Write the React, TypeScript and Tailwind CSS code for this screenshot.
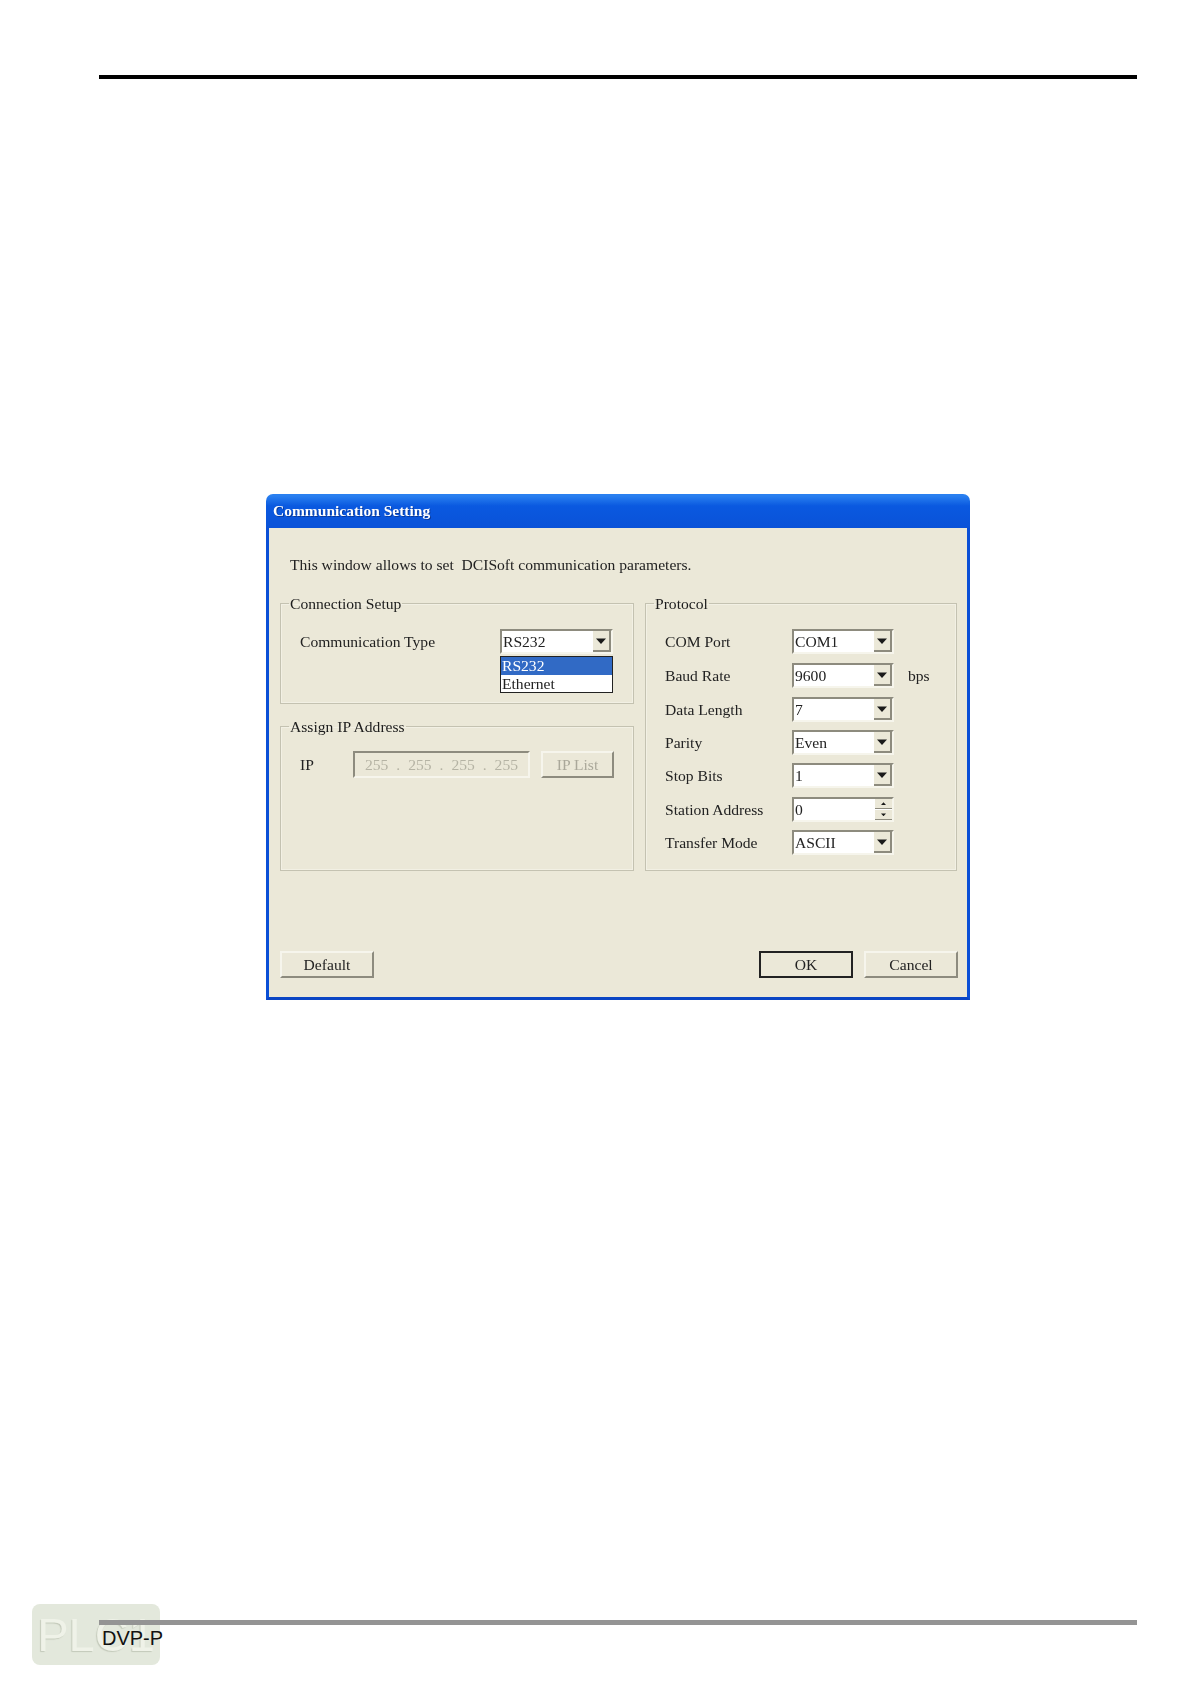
const sunken = "border-2 border-t-[#8d8b7e] border-l-[#8d8b7e] border-r-[#f6f5ec] border-b-[#f6f5ec]";
const raised = "border-2 border-t-[#f6f5ec] border-l-[#f6f5ec] border-r-[#8d8b7e] border-b-[#8d8b7e]";

const protocolRows = [
  { label: "COM Port", value: "COM1", gap: "mt-0" },
  { label: "Baud Rate", value: "9600", gap: "mt-[9px]", unit: "bps" },
  { label: "Data Length", value: "7", gap: "mt-[9px]" },
  { label: "Parity", value: "Even", gap: "mt-[8px]" },
  { label: "Stop Bits", value: "1", gap: "mt-[8px]" },
  { label: "Station Address", value: "0", gap: "mt-[9px]", spin: true },
  { label: "Transfer Mode", value: "ASCII", gap: "mt-[8px]" },
];

function Arrow({ up = false, size = 10 }: { up?: boolean; size?: number }) {
  return (
    <svg width={size} height={size / 2 + 1} viewBox="0 0 10 6" className={up ? "rotate-180" : ""}>
      <path d="M0 0.5h10L5 6z" fill="#1a1a1a" />
    </svg>
  );
}

function Combo({ value, spin, className }: { value: string; spin?: boolean; className: string }) {
  return (
    <div className={`flex h-[25px] bg-white ${sunken} ${className}`}>
      <span className="flex-1 pl-[1px] leading-[21px]">{value}</span>
      {spin ? (
        <div className="flex w-[17px] flex-col gap-[1px]">
          <div className="flex flex-1 items-center justify-center border-b border-[#8d8b7e] bg-[#ebe8d8]">
            <Arrow up size={5} />
          </div>
          <div className="flex flex-1 items-center justify-center border-b border-[#8d8b7e] bg-[#ebe8d8]">
            <Arrow size={5} />
          </div>
        </div>
      ) : (
        <div className="flex w-[18px] items-center justify-center border-r-2 border-b-2 border-r-[#8d8b7e] border-b-[#8d8b7e] bg-[#ebe8d8]">
          <Arrow />
        </div>
      )}
    </div>
  );
}

function Group({ title, className, children }: { title: string; className: string; children?: React.ReactNode }) {
  return (
    <fieldset className={`border border-[#c4c2b1] shadow-[inset_0_0_0_1px_#f2f0e4] ${className}`}>
      <legend className="ml-[8px] h-[20px] px-[1px] leading-[21px] text-[#1c1c1c]">{title}</legend>
      {children}
    </fieldset>
  );
}

function Button({ label, className }: { label: string; className: string }) {
  return (
    <button className={`h-[27px] bg-[#ebe8d8] text-center ${className}`}>
      {label}
    </button>
  );
}

export default function App() {
  return (
    <div className="h-[1684px] w-[1190px] overflow-hidden bg-white pt-[75px] font-['Liberation_Sans',sans-serif]">
      <div className="ml-[99px] mr-[53px] h-[4px] bg-black" />

      <div className="ml-[266px] mt-[415px] flex h-[506px] w-[704px] flex-col font-['Liberation_Serif',serif] text-[15.6px] text-[#222] blur-[0.3px]">
        <div className="flex h-[34px] items-center rounded-t-[7px] bg-gradient-to-b from-[#2a80f0] from-[5%] via-[#0a59e0] via-[35%] to-[#0a52d8] pl-[7px] text-[15.5px] font-bold text-white [text-shadow:1px_1px_0_#0a3a9a]">
          Communication Setting
        </div>

        <div className="flex flex-1 flex-col border-x-[3px] border-b-[3px] border-x-[#0a4fd6] border-b-[#0a45c4] bg-[#ebe8d8] pl-[11px]">
          <p className="mt-[27px] h-[20px] pl-[10px] leading-[20px]">This window allows to set&nbsp; DCISoft communication parameters.</p>

          <div className="mt-[18px] flex gap-[11px]">
            <div className="flex w-[354px] flex-col gap-[12px]">
              <Group title="Connection Setup" className="relative h-[111px]">
                <div className="ml-[19px] mt-[16px] flex h-[25px] items-center justify-between pr-[20px]">
                  <span className="leading-[25px]">Communication Type</span>
                  <Combo value="RS232" className="w-[113px]" />
                </div>
                <ul className="absolute left-[219px] top-[43px] h-[37px] w-[113px] border border-[#222] bg-white leading-[18px]">
                  <li className="h-[18px] bg-[#316ac5] pl-[1px] text-white">RS232</li>
                  <li className="pl-[1px]">Ethernet</li>
                </ul>
              </Group>

              <Group title="Assign IP Address" className="h-[155px]">
                <div className="ml-[19px] mt-[15px] flex h-[27px] items-center">
                  <span className="w-[53px]">IP</span>
                  <div className={`flex h-[27px] w-[177px] items-center justify-around px-[6px] text-[#b5b3a4] ${sunken}`}>
                    <span>255</span><span>.</span><span>255</span><span>.</span><span>255</span><span>.</span><span>255</span>
                  </div>
                  <Button label="IP List" className={`ml-[11px] w-[73px] text-[#aaa89a] ${raised}`} />
                </div>
              </Group>
            </div>

            <Group title="Protocol" className="h-[278px] w-[312px]">
              <div className="ml-[19px] mt-[16px] flex flex-col">
                {protocolRows.map((row) => (
                  <div key={row.label} className={`flex h-[25px] items-center ${row.gap}`}>
                    <span className="w-[127px] leading-[25px]">{row.label}</span>
                    <Combo value={row.value} spin={row.spin} className="w-[102px]" />
                    {row.unit && <span className="ml-[14px]">{row.unit}</span>}
                  </div>
                ))}
              </div>
            </Group>
          </div>

          <div className="mt-[80px] flex pr-[9px]">
            <Button label="Default" className={`w-[94px] ${raised}`} />
            <Button label="OK" className="ml-auto w-[94px] border-2 border-[#222]" />
            <Button label="Cancel" className={`ml-[11px] w-[94px] ${raised}`} />
          </div>
        </div>
      </div>

      <div className="relative ml-[99px] mr-[53px] mt-[620px] h-[5px]">
        <div className="absolute -left-[67px] -top-[16px] flex h-[61px] w-[128px] items-center justify-center rounded-[8px] bg-[#e3e8dc] text-[47px] leading-none text-[#eff2e8] blur-[0.7px] [text-shadow:-1px_1px_1px_#c3c9ba]">
          PLC1
        </div>
        <div className="relative z-10 h-[5px] bg-[#949494]" />
        <span className="relative z-10 ml-[3px] block text-[20px] leading-[26px] text-[#111]">DVP-P</span>
      </div>
    </div>
  );
}
